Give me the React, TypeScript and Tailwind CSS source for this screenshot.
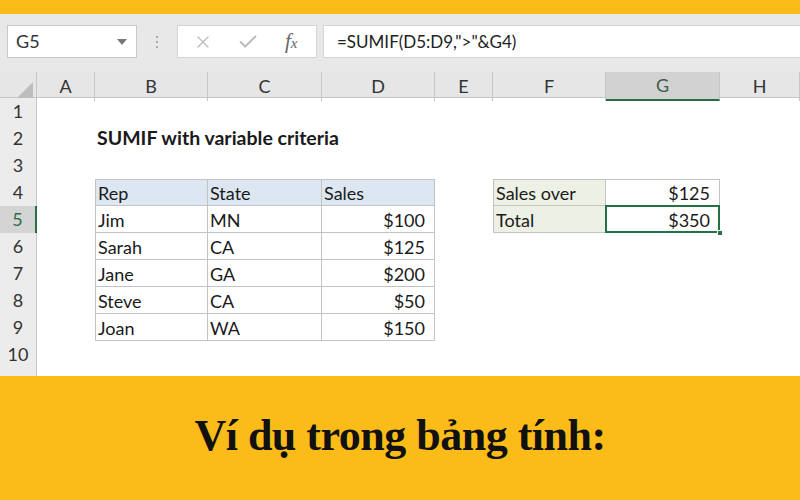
import React from 'react';
import { X, Check } from 'lucide-react';

type Cell = { text: string; bold?: boolean; right?: boolean; bg?: string; table?: 'a' | 'b' };

const colNames = ['A', 'B', 'C', 'D', 'E', 'F', 'G', 'H'];

// sheet content, keyed by row then column letter
const sheet: Record<number, Record<string, Cell>> = {
  2: { B: { text: 'SUMIF with variable criteria', bold: true } },
  4: {
    B: { text: 'Rep', table: 'a', bg: 'head' },
    C: { text: 'State', table: 'a', bg: 'head' },
    D: { text: 'Sales', table: 'a', bg: 'head' },
    F: { text: 'Sales over', table: 'b', bg: 'label' },
    G: { text: '$125', table: 'b', right: true },
  },
  5: {
    B: { text: 'Jim', table: 'a' },
    C: { text: 'MN', table: 'a' },
    D: { text: '$100', table: 'a', right: true },
    F: { text: 'Total', table: 'b', bg: 'label' },
    G: { text: '$350', table: 'b', right: true },
  },
  6: { B: { text: 'Sarah', table: 'a' }, C: { text: 'CA', table: 'a' }, D: { text: '$125', table: 'a', right: true } },
  7: { B: { text: 'Jane', table: 'a' }, C: { text: 'GA', table: 'a' }, D: { text: '$200', table: 'a', right: true } },
  8: { B: { text: 'Steve', table: 'a' }, C: { text: 'CA', table: 'a' }, D: { text: '$50', table: 'a', right: true } },
  9: { B: { text: 'Joan', table: 'a' }, C: { text: 'WA', table: 'a' }, D: { text: '$150', table: 'a', right: true } },
};

const rows = [1, 2, 3, 4, 5, 6, 7, 8, 9, 10];

function SheetCell({ row, col }: { row: number; col: string }) {
  const cell = sheet[row]?.[col];
  const selected = row === 5 && col === 'G';
  if (!cell) return <div className="h-[27px]" />;

  const firstCol = (cell.table === 'a' && col === 'B') || (cell.table === 'b' && col === 'F');
  const firstRow = row === 4;

  return (
    <div
      className={[
        'relative h-[27px] flex items-end pb-[1px] text-[18px] text-[#1a1a1a] leading-[22px] whitespace-nowrap',
        cell.right ? 'justify-end pr-[9px]' : 'pl-[2px]',
        cell.table ? 'border-r border-b border-[#c3c3c3]' : '',
        cell.table && firstCol ? 'border-l' : '',
        cell.table && firstRow ? 'border-t' : '',
        cell.bg === 'head' ? 'bg-[#dde7f2]' : '',
        cell.bg === 'label' ? 'bg-[#edf0e4]' : '',
      ].join(' ')}
    >
      {cell.table ? (
        <span>{cell.text}</span>
      ) : (
        <span className="absolute left-[2px] bottom-[3px] text-[19.5px] font-bold">{cell.text}</span>
      )}
      {selected && (
        <>
          <div className="absolute -left-[1px] -top-[1px] -right-[1px] -bottom-[1px] border-2 border-[#217346]" />
          <div className="absolute -right-[4px] -bottom-[4px] w-[6px] h-[6px] bg-[#217346] border border-white" />
        </>
      )}
    </div>
  );
}

export default function App() {
  return (
    <div className="w-[800px] h-[500px] overflow-hidden flex flex-col bg-[#fbbc19]" style={{ fontFamily: 'Lato, "Open Sans", sans-serif' }}>
      {/* top yellow strip */}
      <div className="h-[14px] shrink-0" />

      {/* formula bar */}
      <div className="h-[58px] shrink-0 bg-[#e8e8e8] flex items-start pt-[11px] pl-[7px] gap-0">
        <div className="w-[130px] h-[33px] bg-white border border-[#c8c8c8] flex items-center justify-between pl-[8px] pr-[9px]">
          <span className="text-[18px] text-[#333]">G5</span>
          <svg width="10" height="6" viewBox="0 0 10 6">
            <path d="M0 0 L10 0 L5 6 Z" fill="#777" />
          </svg>
        </div>
        <div className="w-[40px] h-[33px] flex flex-col items-center justify-center gap-[3px]">
          <span className="w-[2px] h-[2px] bg-[#aaa]" />
          <span className="w-[2px] h-[2px] bg-[#aaa]" />
          <span className="w-[2px] h-[2px] bg-[#aaa]" />
        </div>
        <div className="w-[140px] h-[33px] bg-white border border-[#d4d4d4] flex items-center pl-[15px]">
          <X size={20} strokeWidth={1.6} className="text-[#bdbdbd]" />
          <Check size={22} strokeWidth={2.2} className="text-[#bdbdbd] ml-[24px]" />
          <span className="ml-[26px] text-[21px] italic text-[#666]" style={{ fontFamily: '"Liberation Serif", serif' }}>
            f<span className="text-[15px]">x</span>
          </span>
        </div>
        <div className="ml-[6px] flex-1 h-[33px] bg-white border border-[#d4d4d4] border-r-0 flex items-center pl-[13px]">
          <span className="text-[17px] text-[#222]">=SUMIF(D5:D9,"&gt;"&amp;G4)</span>
        </div>
      </div>

      {/* sheet */}
      <div className="h-[304px] shrink-0 bg-white flex flex-col">
        {/* column headers */}
        <div className="grid grid-cols-[37px_58px_113px_114px_113px_58px_113px_114px_1fr] h-[26px] bg-[#e6e6e6] border-b border-[#c6c6c6]">
          <div className="relative border-r border-[#c6c6c6]">
            <svg className="absolute right-[3px] bottom-[3px]" width="16" height="16" viewBox="0 0 16 16">
              <path d="M16 0 L16 16 L0 16 Z" fill="#bdbdbd" />
            </svg>
          </div>
          {colNames.map((c) => (
            <div
              key={c}
              className={
                c === 'G'
                  ? 'flex items-center justify-center text-[18px] text-[#3a5e4b] bg-[#d2d2d2] border-b-2 border-[#217346] border-r border-r-[#c6c6c6]'
                  : 'flex items-center justify-center text-[18px] text-[#333] border-r border-[#c6c6c6]'
              }
            >
              {c}
            </div>
          ))}
        </div>

        {/* rows */}
        {rows.map((r) => (
          <div key={r} className="grid grid-cols-[37px_58px_113px_114px_113px_58px_113px_114px_1fr] h-[27px]">
            <div
              className={
                r === 5
                  ? 'flex items-center justify-center text-[18px] text-[#2f6d4a] bg-[#d4d4d4] border-r-2 border-[#217346] border-b border-b-[#c6c6c6]'
                  : 'flex items-center justify-center text-[18px] text-[#333] bg-[#ececec] border-r border-b border-[#c6c6c6]'
              }
            >
              {r}
            </div>
            {colNames.map((c) => (
              <SheetCell key={c} row={r} col={c} />
            ))}
          </div>
        ))}
        <div className="flex-1 flex">
          <div className="w-[37px] bg-[#ececec] border-r border-[#c6c6c6]" />
        </div>
      </div>

      {/* caption */}
      <div className="flex-1 flex items-center justify-center pb-[4px]">
        <span className="text-[44px] font-bold text-[#111] tracking-[-0.5px]" style={{ fontFamily: '"Liberation Serif", "DejaVu Serif", serif' }}>
          Ví dụ trong bảng tính:
        </span>
      </div>
    </div>
  );
}
